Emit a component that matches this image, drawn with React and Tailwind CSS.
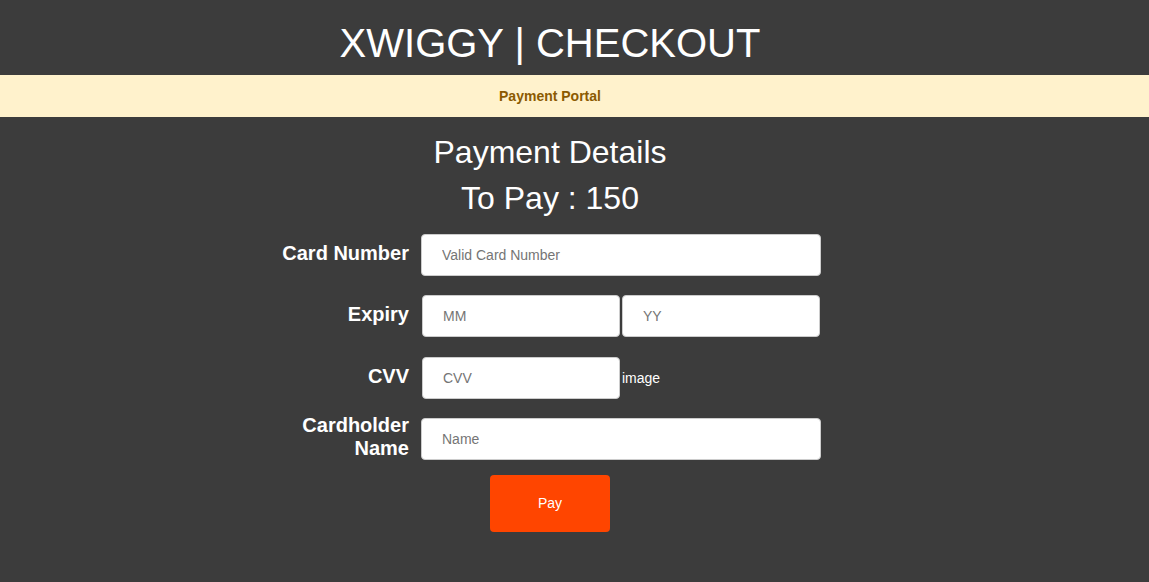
import React, { useState } from 'react';

const inputCls =
  'h-[42px] bg-white border border-[#cccccc] rounded-[4px] pl-5 text-[14px] text-[#333] placeholder:text-[#757575] outline-none';

const Row = ({ label, children, className = '' }) => (
  <div className={`flex items-center ${className}`}>
    <label className="w-[130px] text-right text-[20px] font-bold leading-[23px] text-white -mt-1">
      {label}
    </label>
    <div className="ml-3 flex items-center">{children}</div>
  </div>
);

const App = () => {
  const [card, setCard] = useState('');
  const [mm, setMm] = useState('');
  const [yy, setYy] = useState('');
  const [cvv, setCvv] = useState('');
  const [name, setName] = useState('');

  return (
    <div
      className="min-h-[582px] bg-[#3c3c3c] text-white"
      style={{ fontFamily: '"Liberation Sans", Arial, sans-serif' }}
    >
      <div className="w-[1100px] text-center pt-[20px] pb-[9px]">
        <h1 className="text-[40px] leading-[46px] font-normal">XWIGGY | CHECKOUT</h1>
      </div>

      <div className="h-[42px] bg-[#fff2cc] flex items-center">
        <p className="w-[1100px] text-center text-[14px] font-bold text-[#8b5a00]">Payment Portal</p>
      </div>

      <div className="w-[1100px] pt-[11px] pb-[50px]">
        <h2 className="text-center text-[32px] leading-[48px] -mb-[2px]">Payment Details</h2>
        <h2 className="text-center text-[32px] leading-[48px]">To Pay : 150</h2>

        <form
          className="ml-[279px] mt-[12px] flex flex-col gap-[19px]"
          onSubmit={(e) => e.preventDefault()}
        >
          <Row label="Card Number">
            <input
              className={`${inputCls} w-[400px]`}
              placeholder="Valid Card Number"
              value={card}
              onChange={(e) => setCard(e.target.value)}
            />
          </Row>
          <Row label="Expiry">
            <div className="flex gap-[2px] ml-px">
              <input
                className={`${inputCls} w-[198px]`}
                placeholder="MM"
                value={mm}
                onChange={(e) => setMm(e.target.value)}
              />
              <input
                className={`${inputCls} w-[198px]`}
                placeholder="YY"
                value={yy}
                onChange={(e) => setYy(e.target.value)}
              />
            </div>
          </Row>
          <Row label="CVV" className="mt-px">
            <input
              className={`${inputCls} w-[198px] ml-px`}
              placeholder="CVV"
              value={cvv}
              onChange={(e) => setCvv(e.target.value)}
            />
            <span className="ml-[2px] text-[14px] text-white">image</span>
          </Row>
          <Row label="Cardholder Name">
            <input
              className={`${inputCls} w-[400px]`}
              placeholder="Name"
              value={name}
              onChange={(e) => setName(e.target.value)}
            />
          </Row>
          <div className="flex -mt-[4px] ml-[211px]">
            <button
              type="submit"
              className="w-[120px] h-[57px] bg-[#ff4500] text-white text-[14px] rounded-[4px]"
            >
              Pay
            </button>
          </div>
        </form>
      </div>
    </div>
  );
};

export default App;
